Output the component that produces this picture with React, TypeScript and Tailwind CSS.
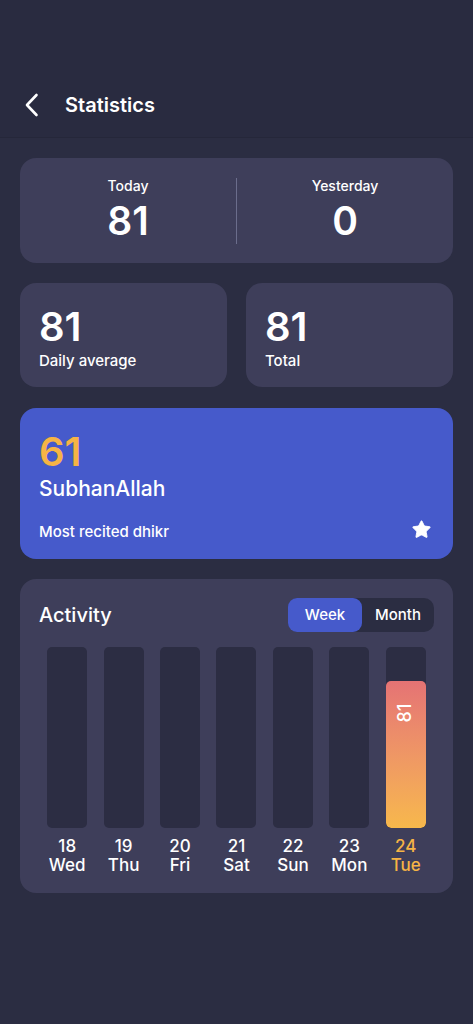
import { Star } from 'lucide-react';

const days = [
  { date: '18', day: 'Wed', value: 0 },
  { date: '19', day: 'Thu', value: 0 },
  { date: '20', day: 'Fri', value: 0 },
  { date: '21', day: 'Sat', value: 0 },
  { date: '22', day: 'Sun', value: 0 },
  { date: '23', day: 'Mon', value: 0 },
  { date: '24', day: 'Tue', value: 81, today: true },
];

const BackIcon = () => (
  <svg width="16" height="24" viewBox="0 0 16 24" fill="none">
    <path d="M12.5 2 L3 12 L12.5 22" stroke="white" strokeWidth="2.6" strokeLinecap="round" strokeLinejoin="round" />
  </svg>
);

export default function App() {
  return (
    <div className="min-h-[1024px] bg-[#2b2d42] text-white font-['Inter','Open_Sans',sans-serif]">
      {/* header */}
      <div className="h-[138px] flex items-end pb-[20px] px-[24px] gap-[25px] bg-[#292b40] border-b border-[#25273a]">
        <BackIcon />
        <h1 className="text-[20px] font-semibold leading-[24px]">Statistics</h1>
      </div>

      <div className="px-[20px] pt-[20px] pb-[40px] flex flex-col">
        {/* today / yesterday */}
        <div className="h-[105px] rounded-[16px] bg-[#3e3e5a] flex items-center">
          <div className="flex-1 h-full flex flex-col items-center pt-[19px]">
            <span className="text-[14px] leading-[18px] font-medium">Today</span>
            <span className="text-[39px] leading-[44px] font-semibold mt-[4px]">81</span>
          </div>
          <div className="w-px h-[66px] bg-[#6b6d8c]" />
          <div className="flex-1 h-full flex flex-col items-center pt-[19px]">
            <span className="text-[14px] leading-[18px] font-medium">Yesterday</span>
            <span className="text-[39px] leading-[44px] font-semibold mt-[4px]">0</span>
          </div>
        </div>

        {/* average / total */}
        <div className="grid grid-cols-2 gap-[19px] mt-[20px]">
          <div className="h-[104px] rounded-[16px] bg-[#3e3e5a] px-[19px] pt-[22px] flex flex-col">
            <span className="text-[40px] leading-[44px] font-semibold">81</span>
            <span className="text-[15px] leading-[20px] font-medium mt-[2px]">Daily average</span>
          </div>
          <div className="h-[104px] rounded-[16px] bg-[#3e3e5a] px-[19px] pt-[22px] flex flex-col">
            <span className="text-[40px] leading-[44px] font-semibold">81</span>
            <span className="text-[15px] leading-[20px] font-medium mt-[2px]">Total</span>
          </div>
        </div>

        {/* most recited */}
        <div className="h-[151px] mt-[21px] rounded-[16px] bg-[#465acb] px-[19px] pt-[22px] pb-[17px] flex flex-col">
          <span className="text-[40px] leading-[44px] font-semibold text-[#f6b445]">61</span>
          <span className="text-[21px] leading-[26px] font-medium mt-[2px]">SubhanAllah</span>
          <div className="mt-auto flex items-center justify-between">
            <span className="text-[15px] leading-[20px] font-medium">Most recited dhikr</span>
            <Star size={21} fill="white" stroke="white" strokeWidth={1} className="mr-[2px] -mt-[6px]" />
          </div>
        </div>

        {/* activity */}
        <div className="mt-[20px] h-[314px] rounded-[16px] bg-[#3e3e5a] px-[19px] pt-[19px]">
          <div className="flex items-center justify-between">
            <h2 className="text-[20px] font-medium leading-[24px]">Activity</h2>
            <div className="flex items-center h-[34px] rounded-[10px] bg-[#2b2d42] text-[15px] font-medium">
              <button className="h-full w-[74px] rounded-[9px] bg-[#465acb]">Week</button>
              <button className="h-full w-[72px]">Month</button>
            </div>
          </div>

          <div className="grid grid-cols-7 mt-[15px]">
            {days.map((d) => (
              <div key={d.date} className="flex flex-col items-center">
                <div className="w-10 h-[181px] rounded-[5px] bg-[#2c2d43] flex flex-col justify-end overflow-hidden">
                  {d.value > 0 && (
                    <div className="h-[147px] rounded-[5px] bg-gradient-to-b from-[#e57374] to-[#f7b84b] flex justify-center pt-[21px]">
                      <div className="w-[22px] h-[22px] flex items-center justify-center">
                        <span className="text-[18px] font-medium leading-none -rotate-90 inline-block">{d.value}</span>
                      </div>
                    </div>
                  )}
                </div>
                <div className={`mt-[9px] flex flex-col items-center text-[17px] leading-[19px] font-medium ${d.today ? 'text-[#f6b445]' : 'text-white'}`}>
                  <span>{d.date}</span>
                  <span>{d.day}</span>
                </div>
              </div>
            ))}
          </div>
        </div>
      </div>
    </div>
  );
}
